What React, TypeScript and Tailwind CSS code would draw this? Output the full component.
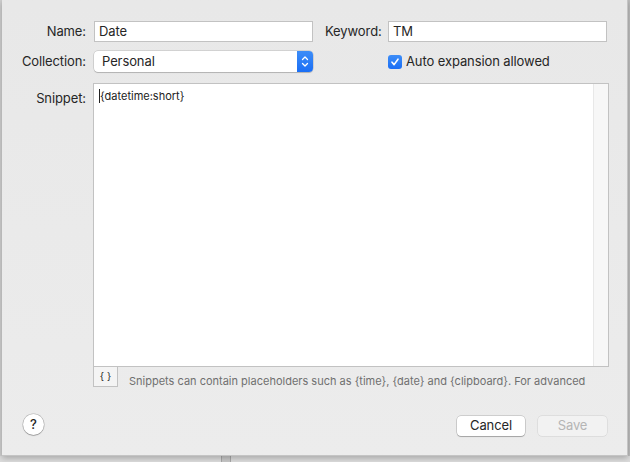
export default function App() {
  return (
    <div className="w-[630px] h-[462px] bg-[#dcdcdc] flex flex-col overflow-hidden font-['Inter',sans-serif] text-[#262626] tracking-[-0.1px]">
      <div className="flex flex-1">
        <div className="w-[2px] bg-[#cfcfcf]" />
        <div className="w-[626px] h-[456px] bg-gradient-to-b from-[#e8e8e8] to-[#ececec] border-r border-b border-[#c4c4c4] shadow-[0_2px_6px_rgba(0,0,0,0.25)] relative">
          {/* row 1 */}
          <div className="flex items-center h-[21px] mt-[21px]">
            <div className="w-[84px] text-right text-[13px]">Name:</div>
            <div className="ml-[8px] w-[219px] h-[21px] bg-white border border-[#c2c2c2] text-[13px] pl-[4px] leading-[19px]">Date</div>
            <div className="ml-[12px] w-[55px] text-right text-[13px]">Keyword:</div>
            <div className="ml-[8px] w-[219px] h-[21px] bg-white border border-[#c2c2c2] text-[13px] pl-[4px] leading-[19px]">TM</div>
          </div>
          {/* row 2 */}
          <div className="flex items-center h-[21px] mt-[9px]">
            <div className="w-[84px] text-right text-[13px]">Collection:</div>
            <div className="ml-[8px] w-[219px] h-[21px] bg-white rounded-[4px] shadow-[0_0_0_0.5px_rgba(0,0,0,0.2),0_1px_1px_rgba(0,0,0,0.15)] flex items-center">
              <span className="flex-1 text-[13px] pl-[8px]">Personal</span>
              <span className="w-[16px] h-[21px] rounded-r-[4px] bg-gradient-to-b from-[#3d8df7] to-[#1a6ef5] flex items-center justify-center">
                <svg width="8" height="13" viewBox="0 0 8 13" fill="none" stroke="white" strokeWidth="1.3" strokeLinecap="round" strokeLinejoin="round">
                  <path d="M1.5 4.5 L4 2 L6.5 4.5" />
                  <path d="M1.5 8.5 L4 11 L6.5 8.5" />
                </svg>
              </span>
            </div>
            <div className="ml-[75px] w-[14px] h-[14px] rounded-[3px] bg-gradient-to-b from-[#3d8df7] to-[#1a6ef5] flex items-center justify-center">
              <svg width="10" height="10" viewBox="0 0 10 10" fill="none" stroke="white" strokeWidth="1.6" strokeLinecap="round" strokeLinejoin="round">
                <path d="M2 5.2 L4.1 7.6 L8 2.2" />
              </svg>
            </div>
            <span className="ml-[4px] text-[13px]">Auto expansion allowed</span>
          </div>
          {/* snippet */}
          <div className="flex mt-[11px]">
            <div className="w-[84px] text-right text-[13px] pt-[6px]">Snippet:</div>
            <div className="ml-[7px]">
              <div className="w-[516px] h-[284px] bg-white border border-[#c2c2c2] flex">
                <div className="flex-1 pl-[5px] pt-[5px] text-[11px] leading-[14px] text-[#222] tracking-normal">
                  <span className="border-l border-[#222]">{"{datetime:short}"}</span>
                </div>
                <div className="w-[15px] bg-[#f7f7f7] border-l border-[#e8e8e8]" />
              </div>
              <div className="flex items-start">
                <div className="w-[25px] h-[21px] -mt-[1px] bg-[#f4f4f4] border border-[#c2c2c2] text-[10px] flex items-center justify-center tracking-normal">{"{ }"}</div>
                <div className="ml-[11px] mt-[6px] text-[11px] text-[#707070] whitespace-nowrap tracking-normal">
                  Snippets can contain placeholders such as {"{time}"}, {"{date}"} and {"{clipboard}"}. For advanced
                </div>
              </div>
            </div>
          </div>
          {/* bottom */}
          <div className="flex items-center mt-[25px] h-[22px]">
            <div className="ml-[21px] -mt-[2px] w-[21px] h-[21px] rounded-full bg-white shadow-[0_0_0_0.5px_rgba(0,0,0,0.25),0_1px_1px_rgba(0,0,0,0.2)] flex items-center justify-center text-[13px] font-medium">?</div>
            <div className="ml-auto w-[68px] h-[20px] bg-white rounded-[4px] shadow-[0_0_0_0.5px_rgba(0,0,0,0.25),0_1px_1px_rgba(0,0,0,0.2)] flex items-center justify-center text-[13px]">Cancel</div>
            <div className="ml-[13px] mr-[20px] w-[69px] h-[20px] bg-[#f2f2f2] rounded-[4px] shadow-[0_0_0_0.5px_rgba(0,0,0,0.12)] flex items-center justify-center text-[13px] text-[#b5b5b5]">Save</div>
          </div>
        </div>
        <div className="w-[2px] bg-[#bdbdbd]" />
      </div>
      <div className="h-[6px] flex">
        <div className="w-[221px]" />
        <div className="w-[10px] bg-[#c8c8c8] border-x border-[#a8a8a8]" />
      </div>
    </div>
  );
}
